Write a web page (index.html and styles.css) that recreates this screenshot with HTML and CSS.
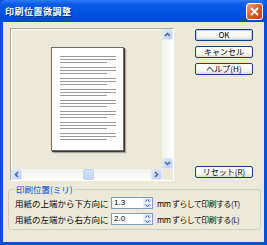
FILE: index.html
```html
<!DOCTYPE html>
<html lang="ja">
<head>
    <meta charset="UTF-8">
    <title>印刷位置微調整</title>
    <link rel="stylesheet" href="styles.css">
</head>
<body>
    <div class="window">
        <div class="titlebar">
            <span class="title">印刷位置微調整</span>
            <span class="close">
                <svg width="9" height="9" viewBox="0 0 9 9"><path d="M1 1L8 8M8 1L1 8" stroke="#fff" stroke-width="1.8"/></svg>
            </span>
        </div>
        <div class="client">
            <div class="top">
                <div class="preview">
                    <div class="view">
                        <div class="paper">
                            <div class="para"><i></i><i></i><i class="short"></i></div>
                            <div class="para"><i></i><i></i><i class="short"></i></div>
                            <div class="para"><i></i><i></i><i class="short"></i></div>
                            <div class="para"><i></i><i></i><i class="short"></i></div>
                            <div class="para"><i></i><i></i><i class="short"></i></div>
                            <div class="para"><i></i><i></i><i class="short"></i></div>
                            <div class="para"><i></i><i></i><i class="short"></i></div>
                            <div class="para"><i></i><i></i><i class="short"></i></div>
                        </div>
                    </div>
                    <div class="vscroll">
                        <span class="arrow"><svg width="7" height="5" viewBox="0 0 7 5"><path d="M1 4L3.5 1.5L6 4" fill="none" stroke="#4D6185" stroke-width="1.5"/></svg></span>
                        <span class="track"></span>
                        <span class="arrow"><svg width="7" height="5" viewBox="0 0 7 5"><path d="M1 1L3.5 3.5L6 1" fill="none" stroke="#4D6185" stroke-width="1.5"/></svg></span>
                    </div>
                    <div class="hscroll">
                        <span class="arrow"><svg width="5" height="7" viewBox="0 0 5 7"><path d="M4 1L1.5 3.5L4 6" fill="none" stroke="#4D6185" stroke-width="1.5"/></svg></span>
                        <span class="track"><span class="thumb"></span></span>
                        <span class="arrow"><svg width="5" height="7" viewBox="0 0 5 7"><path d="M1 1L3.5 3.5L1 6" fill="none" stroke="#4D6185" stroke-width="1.5"/></svg></span>
                    </div>
                    <div class="corner"></div>
                </div>
                <div class="buttons">
                    <button class="btn default">OK</button>
                    <button class="btn">キャンセル</button>
                    <button class="btn">ヘルプ(<u>H</u>)</button>
                    <button class="btn reset">リセット(<u>R</u>)</button>
                </div>
            </div>
            <fieldset class="group">
                <legend>印刷位置(ミリ)</legend>
                <div class="row">
                    <span class="label">用紙の上端から下方向に</span>
                    <span class="spin">
                        <span class="value">1.3</span>
                        <span class="spin-btns">
                            <b><svg width="5" height="3" viewBox="0 0 5 3"><path d="M0.5 2.5L2.5 0.5L4.5 2.5" fill="none" stroke="#4D6185" stroke-width="1"/></svg></b>
                            <b><svg width="5" height="3" viewBox="0 0 5 3"><path d="M0.5 0.5L2.5 2.5L4.5 0.5" fill="none" stroke="#4D6185" stroke-width="1"/></svg></b>
                        </span>
                    </span>
                    <span class="unit">mm ずらして印刷する(<u>T</u>)</span>
                </div>
                <div class="row">
                    <span class="label">用紙の左端から右方向に</span>
                    <span class="spin">
                        <span class="value">2.0</span>
                        <span class="spin-btns">
                            <b><svg width="5" height="3" viewBox="0 0 5 3"><path d="M0.5 2.5L2.5 0.5L4.5 2.5" fill="none" stroke="#4D6185" stroke-width="1"/></svg></b>
                            <b><svg width="5" height="3" viewBox="0 0 5 3"><path d="M0.5 0.5L2.5 2.5L4.5 0.5" fill="none" stroke="#4D6185" stroke-width="1"/></svg></b>
                        </span>
                    </span>
                    <span class="unit">mm ずらして印刷する(<u>L</u>)</span>
                </div>
            </fieldset>
        </div>
    </div>
</body>
</html>
```

FILE: styles.css
```css
body {
    margin: 0;
    font-family: "Noto Sans CJK JP", sans-serif;
    font-size: 8.5px;
    color: #000;
}
.window {
    width: 267px;
    height: 245px;
    box-sizing: border-box;
    padding: 0 3px 3px;
    background: #0a4fd8;
    display: flex;
    flex-direction: column;
}
.titlebar {
    height: 22px;
    margin: 0 -3px;
    padding: 0 4px 0 5px;
    display: flex;
    align-items: center;
    justify-content: space-between;
    background: linear-gradient(#2f7cf5 0%, #0a5ae8 20%, #0052e0 60%, #0049d0 100%);
    border-radius: 6px 6px 0 0;
}
.title {
    color: #fff;
    font-weight: bold;
    font-size: 9px;
    letter-spacing: 0.5px;
    text-shadow: 1px 1px #0a2c80;
}
.close {
    width: 15px;
    height: 15px;
    border: 1px solid #fff;
    border-radius: 3px;
    background: linear-gradient(135deg, #f0a080, #e05a30 50%, #c8401c);
    display: flex;
    align-items: center;
    justify-content: center;
}
.client {
    flex: 1;
    background: #ece9d8;
    padding: 6px 3px 4px 5px;
    display: flex;
    flex-direction: column;
}
.top {
    display: flex;
    gap: 21px;
    margin-left: 2px;
}
.preview {
    width: 164px;
    height: 153px;
    box-sizing: border-box;
    border: 1px solid #a9a797;
    border-right-color: #fff;
    border-bottom-color: #fff;
    display: grid;
    grid-template-columns: 1fr 11px;
    grid-template-rows: 1fr 11px;
}
.view {
    display: flex;
    align-items: center;
    justify-content: center;
    padding-bottom: 2px;
    border-top: 1px solid #fff;
    border-left: 1px solid #fff;
}
.paper {
    width: 73px;
    height: 104px;
    box-sizing: border-box;
    background: #fff;
    border: 1px solid #6b6b6b;
    box-shadow: 1px 1px 0 #3a3a3a, 2px 2px 1px #a8a69a;
    padding: 8px 7px 0 8px;
    display: flex;
    flex-direction: column;
    gap: 4px;
}
.para {
    display: flex;
    flex-direction: column;
    gap: 2px;
}
.para i {
    display: block;
    height: 1px;
    background: #9a9a9a;
}
.para i.short {
    width: 85%;
}
.vscroll {
    display: flex;
    flex-direction: column;
    background: linear-gradient(90deg, #f3f3ee, #fefefe);
}
.hscroll {
    display: flex;
    background: linear-gradient(#f3f3ee, #fefefe);
}
.arrow {
    width: 11px;
    height: 11px;
    box-sizing: border-box;
    border: 1px solid #e1e9fb;
    border-radius: 2px;
    background: linear-gradient(135deg, #dce7fd, #bcd0fa);
    display: flex;
    align-items: center;
    justify-content: center;
    flex-shrink: 0;
}
.track {
    flex: 1;
    position: relative;
}
.thumb {
    position: absolute;
    left: 61px;
    top: 0;
    width: 11px;
    height: 11px;
    box-sizing: border-box;
    border: 1px solid #bfd0f5;
    border-radius: 2px;
    background: linear-gradient(#d4e1fb, #c4d5f8);
}
.corner {
    background: #ece9d8;
}
.buttons {
    width: 58px;
    display: flex;
    flex-direction: column;
    gap: 5px;
    padding-top: 1px;
}
.btn {
    height: 12px;
    padding: 0;
    border: 1px solid #1c3d7a;
    border-radius: 2px;
    background: linear-gradient(#ffffff, #f4f4ef 70%, #dcdad0);
    font-family: inherit;
    font-size: 8px;
    line-height: 10px;
    color: #000;
}
.btn.default {
    box-shadow: inset 0 0 0 1px #b8cdf2;
}
.btn u, .unit u {
    text-decoration: none;
}
.btn.reset {
    margin-top: auto;
    margin-bottom: 3px;
}
.group {
    margin: 4px 0 0;
    padding: 3px 0 4px 6px;
    border: 1px solid #d0d0bf;
    border-radius: 3px;
    display: flex;
    flex-direction: column;
    gap: 4px;
}
.group legend {
    color: #0046d5;
    padding: 0 1px;
    font-size: 8.5px;
    line-height: 9px;
}
.row {
    display: flex;
    align-items: center;
    height: 12px;
}
.label {
    width: 96px;
}
.spin {
    width: 42px;
    height: 12px;
    box-sizing: border-box;
    border: 1px solid #7f9db9;
    background: #fff;
    display: flex;
    align-items: center;
}
.value {
    flex: 1;
    padding-left: 2px;
    font-family: "Liberation Sans", sans-serif;
    font-size: 8px;
    line-height: 10px;
}
.spin-btns {
    width: 9px;
    height: 10px;
    display: flex;
    flex-direction: column;
}
.spin-btns b {
    flex: 1;
    display: flex;
    align-items: center;
    justify-content: center;
    background: linear-gradient(135deg, #e0e9fd, #bed1f9);
    border: 1px solid #e6edfc;
    border-radius: 1px;
    box-sizing: border-box;
}
.unit {
    margin-left: 4px;
    font-size: 7.8px;
    letter-spacing: -0.4px;
}
```
